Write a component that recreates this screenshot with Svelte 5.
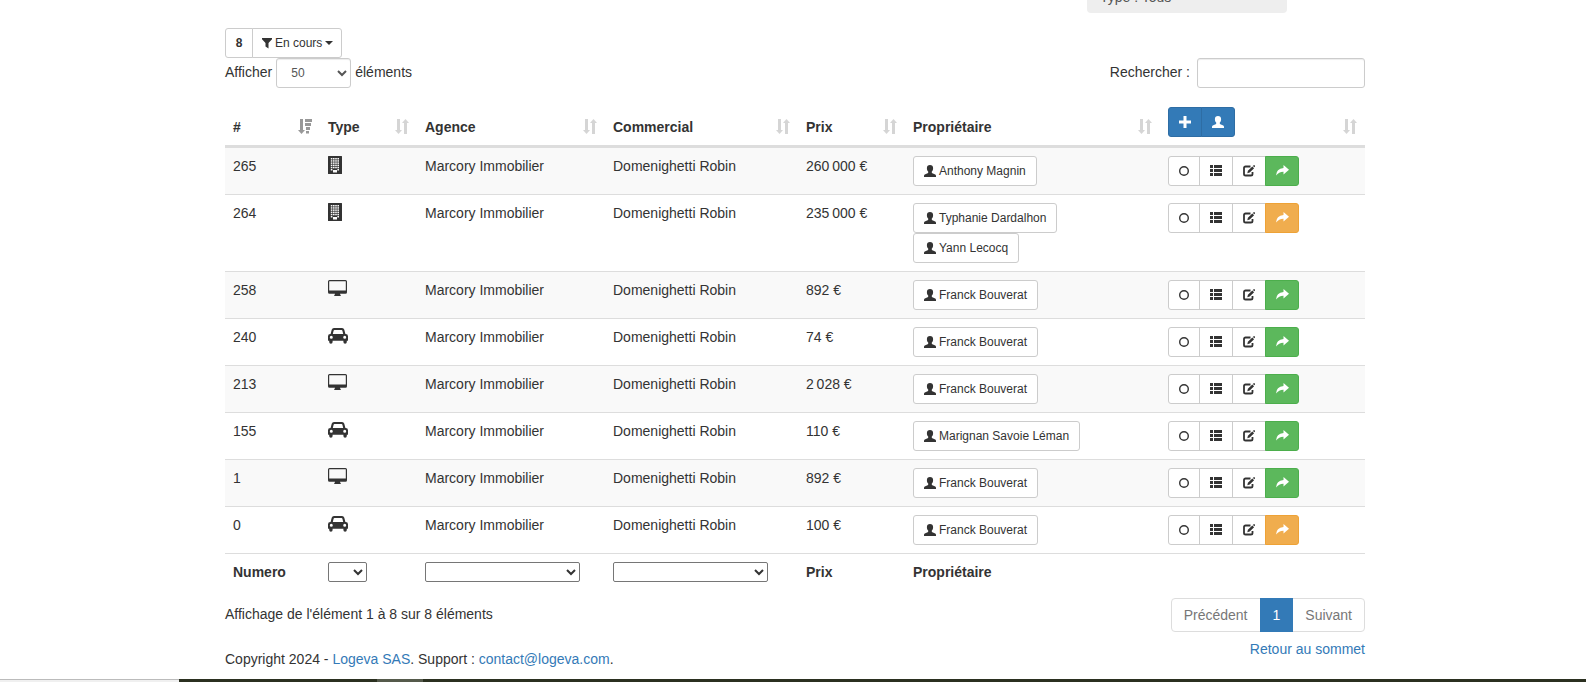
<script>
  const columns = [
    { label: '#', width: 95, sort: 'desc' },
    { label: 'Type', width: 97 },
    { label: 'Agence', width: 188 },
    { label: 'Commercial', width: 193 },
    { label: 'Prix', width: 107 },
    { label: 'Propriétaire', width: 255 },
    { label: '', width: 205 }
  ];

  const rows = [
    { id: 265, type: 'building', price: '260\u202f000 €', owners: ['Anthony Magnin'], state: 'success' },
    { id: 264, type: 'building', price: '235\u202f000 €', owners: ['Typhanie Dardalhon', 'Yann Lecocq'], state: 'warning' },
    { id: 258, type: 'desktop', price: '892 €', owners: ['Franck Bouverat'], state: 'success' },
    { id: 240, type: 'car', price: '74 €', owners: ['Franck Bouverat'], state: 'success' },
    { id: 213, type: 'desktop', price: '2\u202f028 €', owners: ['Franck Bouverat'], state: 'success' },
    { id: 155, type: 'car', price: '110 €', owners: ['Marignan Savoie Léman'], state: 'success' },
    { id: 1, type: 'desktop', price: '892 €', owners: ['Franck Bouverat'], state: 'success' },
    { id: 0, type: 'car', price: '100 €', owners: ['Franck Bouverat'], state: 'warning' }
  ];

  const windows = [2, 4.200, 6.400, 8.600, 10.800].flatMap((y) => [2.800, 5, 7.200, 9.400].map((x) => ({ x, y })));
</script>

{#snippet user()}
  <svg class="icon" width="12" height="12" viewBox="0 0 12 12" aria-hidden="true">
    <path d="M6 0C4 0 2.900 1.100 2.900 2.900c0 1.600.5 2.900 1.300 3.700v.8c0 .4-.2.600-.6.800L.8 9.600c-.5.300-.8.700-.8 1.300V12h12v-1.100c0-.6-.3-1-.8-1.300L8.400 8.200c-.4-.2-.6-.4-.6-.8v-.8c.8-.8 1.300-2.100 1.300-3.700C9.100 1.100 8 0 6 0z" />
  </svg>
{/snippet}

{#snippet sortIcon(kind)}
  <svg class="sort" class:active={kind === 'desc'} width="14" height="15" viewBox="0 0 14 15" aria-hidden="true">
    {#if kind === 'desc'}
      <path d="M2 0h3v11h2L3.500 15 0 11h2zM7 0h7v3H7zM7 4h6v3H7zM8 8h4v3H8zM8 12h3v2.500H8z" />
    {:else}
      <path d="M2 0h3v11h2L3.500 15 0 11h2zM9 15h3V4h2L10.500 0 7 4h2z" />
    {/if}
  </svg>
{/snippet}

{#snippet typeIcon(kind)}
  {#if kind === 'building'}
    <svg class="type" width="14" height="18" viewBox="0 0 14 18" role="img" aria-label="Immeuble">
      <path fill-rule="evenodd" d="M.5 0h13q.5 0 .5.500v17q0 .5-.5.500H.5q-.5 0-.5-.5V.5Q0 0 .5 0zM5 14v2.500h4V14z" />
      {#each windows as w}<rect class="pane" x={w.x} y={w.y} width="1.600" height="1.500" />{/each}
      <path class="pane" d="M2.800 13h1.600v1.500H2.800zm6.600 0H11v1.500H9.400z" />
    </svg>
  {:else if kind === 'desktop'}
    <svg class="type" width="19" height="18" viewBox="0 0 19 18" role="img" aria-label="Écran">
      <path fill-rule="evenodd" d="M1.500 0h16Q19 0 19 1.500v10.800q0 1.500-1.500 1.500H12q.2 1 .8 1.500.3.700-.4.700H6.600q-.7 0-.4-.7.600-.5.800-1.500H1.500Q0 13.800 0 12.300V1.500Q0 0 1.500 0zm0 1.200q-.3 0-.3.300v8.700q0 .3.300.3h16q.3 0 .3-.3V1.500q0-.3-.3-.3z" />
    </svg>
  {:else}
    <svg class="type" width="20" height="18" viewBox="0 0 20 18" role="img" aria-label="Voiture">
      <path fill-rule="evenodd" d="M6 1h8q1.800 0 2.300 1.700L17.400 7h.3Q20 7 20 9.300v3.900q0 .5-.5.500h-.7v1.300q0 1.800-1.700 1.800t-1.700-1.800v-1.300H4.600v1.300q0 1.800-1.700 1.800T1.200 15v-1.300H.5q-.5 0-.5-.5V9.300Q0 7 2.300 7h.3l1.100-4.300Q4.200 1 6 1zm.4 2q-.6 0-.8.700L4.800 7h10.400l-.8-3.300q-.2-.7-.8-.7zM3.300 8.800a1.500 1.500 0 1 0 0 3 1.500 1.500 0 0 0 0-3zm13.400 0a1.500 1.500 0 1 0 0 3 1.500 1.500 0 0 0 0-3z" />
    </svg>
  {/if}
{/snippet}

<div class="page">
  <main class="container">
    <div class="top"><div class="chip">Type : Tous</div></div>

    <div class="group filters">
      <button class="btn count"><b>8</b></button>
      <button class="btn">
        <svg class="icon" width="10" height="12" viewBox="0 0 10 12" aria-hidden="true"><path d="M0 1h10v1.200L6.500 6v5.500L3.500 9.500V6L0 2.200z" /></svg>
        En cours
        <svg class="caret" width="8" height="4" viewBox="0 0 8 4" aria-hidden="true"><path d="M0 0h8L4 4z" /></svg>
      </button>
    </div>

    <div class="controls">
      <label><span>Afficher</span>
        <select class="field length"><option>50</option><option>100</option></select>
        <span>éléments</span></label>
      <label class="search"><span>Rechercher :</span> <input class="field" type="search" /></label>
    </div>

    <table>
      <colgroup>
        {#each columns as c}<col style="width: {c.width}px" />{/each}
      </colgroup>
      <thead>
        <tr>
          {#each columns as c}
            <th>
              <div class="head">
                {#if c.label}
                  <span>{c.label}</span>
                {:else}
                  <div class="group">
                    <button class="btn primary" aria-label="Ajouter">
                      <svg class="icon" width="12" height="12" viewBox="0 0 12 12" aria-hidden="true"><path d="M4.500 0h3v4.500H12v3H7.500V12h-3V7.500H0v-3h4.500z" /></svg>
                    </button>
                    <button class="btn primary" aria-label="Propriétaire">{@render user()}</button>
                  </div>
                {/if}
                {@render sortIcon(c.sort)}
              </div>
            </th>
          {/each}
        </tr>
      </thead>
      <tbody>
        {#each rows as r}
          <tr>
            <td>{r.id}</td>
            <td>{@render typeIcon(r.type)}</td>
            <td>Marcory Immobilier</td>
            <td>Domenighetti Robin</td>
            <td>{r.price}</td>
            <td>
              <div class="owners">
                {#each r.owners as o}
                  <button class="btn">{@render user()} {o}</button>
                {/each}
              </div>
            </td>
            <td>
              <div class="group">
                <button class="btn" aria-label="État">
                  <svg class="icon" width="10" height="12" viewBox="0 0 10 12" aria-hidden="true"><circle cx="5" cy="6" r="4.300" fill="none" stroke="currentColor" stroke-width="1.400" /></svg>
                </button>
                <button class="btn" aria-label="Détails">
                  <svg class="icon" width="12" height="12" viewBox="0 0 12 12" aria-hidden="true"><path d="M0 0h3v3H0zm4 0h8v3H4zM0 4h3v3H0zm4 0h8v3H4zM0 8h3v3H0zm4 0h8v3H4z" /></svg>
                </button>
                <button class="btn" aria-label="Modifier">
                  <svg class="icon" width="12" height="12" viewBox="0 0 12 12" aria-hidden="true">
                    <path d="M7.500 1.500H2.600Q1 1.500 1 3.100v5.800q0 1.600 1.600 1.600h5.300q1.600 0 1.600-1.600V7" fill="none" stroke="currentColor" stroke-width="1.800" />
                    <path d="M4.300 8.300l.6-2.500L9.300 1.400l1.800 1.800L6.700 7.600zM9.800.9l.9-.7q.4-.3.800 0l.4.500q.3.400 0 .8l-.5.800z" />
                  </svg>
                </button>
                <button class="btn {r.state}" aria-label="Partager">
                  <svg class="icon" width="13" height="12" viewBox="0 0 13 12" aria-hidden="true"><path d="M7.500 0L13 4.700 7.500 9.400V6.700Q3 6.600 0 10.500.3 3.700 7.500 3z" /></svg>
                </button>
              </div>
            </td>
          </tr>
        {/each}
      </tbody>
      <tfoot>
        <tr>
          <th>Numero</th>
          <th><select class="pick small" aria-label="Type"><option></option></select></th>
          <th><select class="pick" aria-label="Agence"><option></option></select></th>
          <th><select class="pick" aria-label="Commercial"><option></option></select></th>
          <th>Prix</th>
          <th>Propriétaire</th>
          <th></th>
        </tr>
      </tfoot>
    </table>

    <div class="bottom">
      <div class="info">
        <p>Affichage de l'élément 1 à 8 sur 8 éléments</p>
        <p>Copyright 2024 - <a href="#logeva">Logeva SAS</a>. Support : <a href="#contact">contact@logeva.com</a>.</p>
      </div>
      <div class="paging">
        <nav aria-label="Pagination">
          <a class="muted" href="#prev">Précédent</a>
          <a class="current" href="#page1">1</a>
          <a class="muted" href="#next">Suivant</a>
        </nav>
        <a href="#top">Retour au sommet</a>
      </div>
    </div>
  </main>
  <div class="strip"><span class="status"></span><span class="gap"></span><span class="tab"></span></div>
</div>

<style>
  :global(body) {
    margin: 0;
    background: #fff;
    overflow: hidden;
  }
  .page, .page * { box-sizing: border-box; }
  .page {
    font: 14px/20px "Liberation Sans", Arial, sans-serif;
    color: #333;
  }
  a { color: #337ab7; text-decoration: none; }
  p { margin: 0; }
  .container {
    max-width: 1174px;
    margin: 0 auto;
    padding: 0 15px 0 19px;
  }
  .top {
    display: flex;
    align-items: flex-end;
    justify-content: flex-end;
    height: 13px;
    padding-right: 78px;
    margin-bottom: 15px;
    overflow: hidden;
  }
  .chip {
    width: 200px;
    padding: 6px 13px;
    border-radius: 4px;
    background: #eee;
    color: #555;
  }
  .group { display: flex; }
  .btn {
    display: inline-flex;
    align-items: center;
    gap: 3px;
    height: 30px;
    padding: 5px 10px;
    border: 1px solid #ccc;
    border-radius: 3px;
    background: #fff;
    color: #333;
    font: 12px/18px "Liberation Sans", Arial, sans-serif;
    white-space: nowrap;
    cursor: pointer;
  }
  .filters .btn + .btn { padding: 5px 8px 5px 9px; }
  .filters .count {
    width: 28px;
    justify-content: center;
  }
  .group .btn + .btn {
    margin-left: -1px;
    border-top-left-radius: 0;
    border-bottom-left-radius: 0;
  }
  .group .btn:not(:last-child) {
    border-top-right-radius: 0;
    border-bottom-right-radius: 0;
  }
  .btn.primary { background: #337ab7; border-color: #2e6da4; color: #fff; }
  .btn.success, .btn.warning { width: 34px; color: #fff; }
  .btn.success { background: #5cb85c; border-color: #4cae4c; }
  .btn.warning { background: #f0ad4e; border-color: #eea236; }
  svg { display: block; flex: none; fill: currentColor; }
  .pane { fill: #f9f9f9; }
  .controls {
    display: flex;
    justify-content: space-between;
    margin-bottom: 11px;
  }
  .controls label {
    display: flex;
    align-items: center;
    gap: 4px;
  }
  .controls span { padding-bottom: 2px; }
  .controls .search { gap: 7px; }
  .field {
    width: 168px;
    height: 30px;
    padding: 5px 10px;
    border: 1px solid #ccc;
    border-radius: 3px;
    background: #fff;
    box-shadow: inset 0 1px 1px rgba(0, 0, 0, 0.075);
    color: #555;
    font: 12px/18px "Liberation Sans", Arial, sans-serif;
  }
  .length { width: 75px; }
  table {
    width: 100%;
    table-layout: fixed;
    border-collapse: separate;
    border-spacing: 0;
    margin-bottom: 6px;
  }
  th, td {
    padding: 8px;
    text-align: left;
    vertical-align: top;
    border-top: 1px solid #ddd;
  }
  thead th {
    vertical-align: bottom;
    border-top: 0;
    border-bottom: 2px solid #ddd;
  }
  tbody tr:nth-child(odd) td { background: #f9f9f9; }
  .head {
    display: flex;
    align-items: flex-end;
    justify-content: space-between;
  }
  .sort { margin-bottom: 3px; opacity: 0.2; }
  .sort.active { opacity: 0.5; }
  .owners {
    display: flex;
    flex-direction: column;
    align-items: flex-start;
  }
  .pick {
    display: block;
    width: 100%;
    max-width: 155px;
    height: 20px;
    padding: 0;
    border: 1px solid #767676;
    border-radius: 2px;
    background: #fff;
    color: #333;
    font: 14px/18px "Liberation Sans", Arial, sans-serif;
  }
  .pick.small { width: 39px; }
  .bottom {
    display: flex;
    justify-content: space-between;
  }
  .info {
    display: flex;
    flex-direction: column;
    gap: 25px;
    padding: 8px 0 10px;
  }
  .paging {
    display: flex;
    flex-direction: column;
    align-items: flex-end;
    gap: 7px;
    padding-top: 2px;
  }
  nav { display: flex; }
  nav a {
    padding: 6px 12px;
    border: 1px solid #ddd;
    margin-left: -1px;
  }
  nav a:first-child { border-radius: 4px 0 0 4px; }
  nav a:last-child { border-radius: 0 4px 4px 0; }
  nav .muted { color: #777; }
  nav .current {
    position: relative;
    z-index: 1;
    background: #337ab7;
    border-color: #337ab7;
    color: #fff;
  }
  .strip {
    display: flex;
    height: 3px;
    background: #2b3020;
  }
  .status {
    width: 179px;
    background: #f0f0f0;
    border-top: 1px solid #bbb;
  }
  .gap { width: 198px; }
  .tab { width: 46px; background: #555a4b; }
</style>
